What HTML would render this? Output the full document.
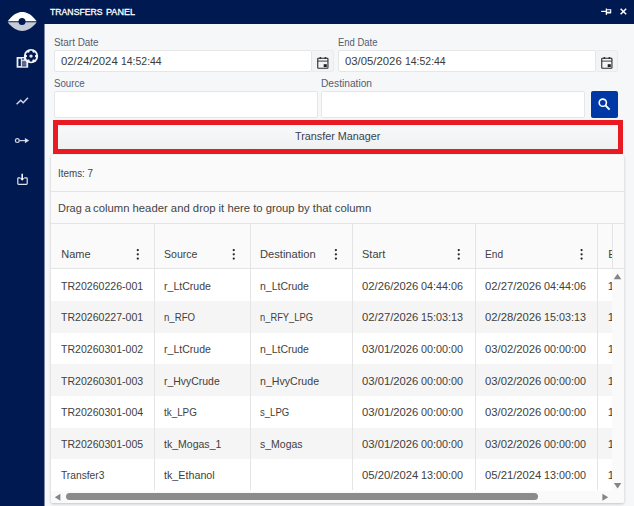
<!DOCTYPE html>
<html><head><meta charset="utf-8">
<style>
*{box-sizing:border-box;margin:0;padding:0}
html,body{width:634px;height:506px;overflow:hidden;background:#f6f7f9;font-family:"Liberation Sans",sans-serif;color:#333}
.abs{position:absolute}
#side{left:0;top:0;width:44px;height:506px;background:#001950}
#title{left:44px;top:0;width:590px;height:24px;background:#001950}
#title .t{position:absolute;top:6.2px;font-size:9.9px;font-weight:normal;-webkit-text-stroke:.32px #fff;color:#fff;line-height:12px;transform-origin:0 50%;white-space:nowrap}
.lbl span{display:inline-block;transform-origin:0 50%}
.lbl{font-size:10px;color:#525d73;line-height:12px;white-space:nowrap}
.inp{position:absolute;background:#fff;border:1px solid #e6e6e6;border-radius:2px;font-size:11px;line-height:20.4px;color:#3a3a3a;padding-left:5.5px;white-space:nowrap}
.di{font-size:11px;line-height:21px;padding-left:6.2px}
.di span{display:inline-block;transform-origin:0 50%}
.d1{transform:translateY(.2px) scaleX(1.03)}
.d2{position:absolute;left:66.1px;top:0;transform:translateY(.2px) scaleX(.95)}
.calbtn{background:#f3f4f6;border:1px solid #eaebed;border-left:none;border-radius:0 3px 3px 0}
#card{left:51.3px;top:154.5px;width:572.6px;height:348.4px;background:#fafafa;box-shadow:0 1px 3px rgba(0,0,0,.22);border-radius:2px;overflow:hidden}
.cell{position:absolute;font-size:11px;line-height:14px;white-space:nowrap;color:#414141}
.row{position:absolute;left:0;width:560.3px;height:31.65px}
.keb{position:absolute;width:2.2px;height:2.2px;background:#222;box-shadow:0 4.1px 0 #222,0 8.2px 0 #222}
.hd{color:#414141}
.rc{font-size:11.4px}
.cell span{display:inline-block;transform-origin:0 50%}
.vl{position:absolute;width:1px;background:#e4e4e4}
.hl{position:absolute;height:1px;background:#e4e4e4;left:0}
</style></head><body>
<div id="side" class="abs">
<svg class="abs" style="left:0;top:0" width="44" height="200" viewBox="0 0 44 200">
 <path d="M7.7 21.3 C12.7 14.5 17.7 12 22.2 12 C26.7 12 31.7 14.5 36.7 21.3 Z" fill="#fff"/>
 <path d="M7.7 22.3 C12.7 28.5 17.7 31 22.2 31 C26.7 31 31.7 28.5 36.7 22.3 Z" fill="#c6cbd9"/>
 <circle cx="22" cy="21.6" r="3.5" fill="#001950"/>
 <!-- icon 2: doc + gear -->
 <rect x="16.6" y="57" width="11.6" height="10.7" fill="#eef0f5"/>
 <rect x="18.4" y="58.7" width="2.4" height="7.4" fill="#001950"/>
 <rect x="21.9" y="60.6" width="4.4" height="5.8" fill="#8f98b3"/>
 <rect x="21.9" y="58.4" width="2" height="1.2" fill="#001950"/>
 <path d="M21.9 62.1h4.4M21.9 64h4.4M21.9 65.8h4.4" stroke="#001950" stroke-width=".7"/>
 <circle cx="31" cy="56.1" r="7.2" fill="#f3f4f8"/>
 <g fill="#001950">
  <circle cx="31" cy="56.1" r="4"/>
  <g id="teeth"><rect x="29.6" y="50.8" width="2.8" height="10.6" rx=".6"/></g>
  <use href="#teeth" transform="rotate(60 31 56.1)"/>
  <use href="#teeth" transform="rotate(120 31 56.1)"/>
 </g>
 <circle cx="31" cy="56.1" r="1.7" fill="#dfe3ee"/>
 <!-- trend -->
 <path d="M16.6 104.2 L20.7 100.3 L23.2 102.7 L28 97.8" fill="none" stroke="#d3d8e6" stroke-width="1.5"/>
 <!-- key arrow -->
 <g fill="none" stroke="#ccd2e1" stroke-width="1.2">
  <circle cx="17.3" cy="140.6" r="1.9"/>
  <path d="M19.3 140.6H25.5"/>
 </g>
 <path d="M24.9 138 L29.2 140.6 L24.9 143.2Z" fill="#d6dbe7"/>
 <!-- download -->
 <g fill="none" stroke="#dfe3ee" stroke-width="1.2">
  <path d="M20.3 177.8H18.6Q17.8 177.8 17.8 178.6V183.5Q17.8 184.3 18.6 184.3H26.4Q27.2 184.3 27.2 183.5V178.6Q27.2 177.8 26.4 177.8H24.2"/>
  <path d="M22.2 173.8V179" stroke="#fff" stroke-width="1.5"/>
 </g>
 <path d="M20 178.2H24.4L22.2 180.7Z" fill="#fff"/>
</svg>
</div>
<div class="abs" style="left:44px;top:24px;width:1px;height:482px;background:#7b88a4"></div>
<div id="title" class="abs"><div class="t" style="left:6.3px;transform:scaleX(.879)">TRANSFERS</div><div class="t" style="left:62.1px;transform:scaleX(.917)">PANEL</div>
<svg class="abs" style="left:552px;top:4px" width="36" height="16" viewBox="0 0 36 16">
 <g fill="none" stroke="#fff" stroke-width="1.4">
  <path d="M5.2 7.4H10.2" stroke-width="1.2"/><path d="M10.4 4.5V10.9" stroke-width="1.3"/><path d="M10.4 5.7H14.7V8.6H10.4" stroke-width="1.1"/><path d="M10.4 8.5H14.9" stroke-width="1.6"/>
  <path d="M24.6 4.7L30.2 10.3M30.2 4.7L24.6 10.3" stroke-width="1.5"/>
 </g>
</svg>
</div>

<div class="abs lbl" style="left:53.7px;top:37.2px"><span style="transform:scaleX(.99)">Start Date</span></div>
<div class="abs inp di" style="left:54px;top:50px;width:258px;height:22px"><span class="d1">02/24/2024</span> <span class="d2">14:52:44</span></div>
<div class="abs calbtn" style="left:312px;top:50px;width:22.3px;height:22px"></div>
<div class="abs lbl" style="left:338px;top:37.2px"><span style="transform:scaleX(.945)">End Date</span></div>
<div class="abs inp di" style="left:338px;top:50px;width:258px;height:22px"><span class="d1">03/05/2026</span> <span class="d2">14:52:44</span></div>
<div class="abs calbtn" style="left:596px;top:50px;width:22px;height:22px"></div>
<svg class="abs" style="left:315.1px;top:54.5px" width="16" height="16" viewBox="0 0 16 16"><g id="cal" fill="none" stroke="#2b2b2b" stroke-width="1.1"><rect x="2.75" y="3.3" width="10.2" height="9.9" rx=".5"/><path d="M2.75 6.1H12.95" stroke-width=".9"/><circle cx="5.35" cy="3.1" r="1" fill="#2b2b2b" stroke="none"/><circle cx="10.45" cy="3.1" r="1" fill="#2b2b2b" stroke="none"/><rect x="8.7" y="9.2" width="3.1" height="2.9" fill="#222" stroke="none"/></g></svg>
<svg class="abs" style="left:598.9px;top:54.5px" width="16" height="16" viewBox="0 0 16 16"><use href="#cal"/></svg>

<div class="abs lbl" style="left:53.7px;top:78.3px"><span style="transform:scaleX(.97)">Source</span></div>
<div class="abs inp" style="left:54px;top:91px;width:264px;height:27px"></div>
<div class="abs lbl" style="left:321px;top:78.3px"><span style="transform:scaleX(1.02)">Destination</span></div>
<div class="abs inp" style="left:321px;top:91px;width:264px;height:27px"></div>
<div class="abs" style="left:591px;top:91px;width:27px;height:27px;background:#0039a6;border-radius:2px"></div>
<svg class="abs" style="left:591px;top:91px" width="27" height="27" viewBox="0 0 27 27"><g fill="none" stroke="#fff" stroke-width="1.6"><circle cx="11.8" cy="11.7" r="3.6"/><path d="M14.4 14.4L18.6 18.6" stroke-width="2"/></g></svg>

<div class="abs" style="left:53.1px;top:119.9px;width:569.5px;height:33.8px;background:#ea1a23"><div class="abs" style="left:4.8px;top:5.1px;width:559.9px;height:23.8px;background:linear-gradient(#f8f9fb,#eff0f2);font-size:11.8px;line-height:23.4px;text-align:center;color:#3a3f4b"><span id="tm" style="display:inline-block;transform:scaleX(.915);position:relative;left:-0.4px">Transfer Manager</span></div></div>

<div id="card" class="abs">
 <div class="cell" style="left:7px;top:11.4px;font-size:10px;color:#444"><span style="transform:translateY(.7px) scaleX(.985)">Items: 7</span></div>
 <div class="hl" style="top:36.4px;width:573px"></div>
 <div class="cell" style="left:7px;top:46.6px;font-size:11px;color:#444"><span style="transform:scaleX(.995)">Drag a</span> <span style="position:absolute;left:34.9px;top:0;transform:scaleX(1.027)">column header and drop it here to group by that column</span></div>
 <div class="hl" style="top:68.5px;width:573px"></div>
<!--GRID-->
<div class="abs" style="left:0;top:70px;width:572px;height:44px;background:#fafafa"></div>
<div class="cell hd" style="left:9.9px;top:92.9px"><span style="transform:scaleX(1.000)">Name</span></div>
<div class="cell hd" style="left:112.7px;top:92.9px"><span style="transform:scaleX(0.960)">Source</span></div>
<div class="cell hd" style="left:208.7px;top:92.9px"><span style="transform:scaleX(1.012)">Destination</span></div>
<div class="cell hd" style="left:310.7px;top:92.9px"><span style="transform:scaleX(1.000)">Start</span></div>
<div class="cell hd" style="left:433.7px;top:92.9px"><span style="transform:scaleX(0.925)">End</span></div>
<div class="cell hd" style="left:557.0px;top:92.9px;width:3.4px;overflow:hidden"><span>E</span></div>
<div class="row" style="top:114.8px;background:#fff">
<div class="cell rc" style="left:9.9px;top:9.3px"><span style="transform:scaleX(0.927)">TR20260226-001</span></div>
<div class="cell rc" style="left:112.7px;top:9.3px"><span style="transform:scaleX(0.926)">r_LtCrude</span></div>
<div class="cell rc" style="left:208.7px;top:9.3px"><span style="transform:scaleX(0.920)">n_LtCrude</span></div>
<div class="cell rc" style="left:310.7px;top:9.3px"><span style="transform:scaleX(0.989)">02/26/2026</span> <span style="position:absolute;left:59.4px;top:0;transform:scaleX(0.946)">04:44:06</span></div>
<div class="cell rc" style="left:433.7px;top:9.3px"><span style="transform:scaleX(0.989)">02/27/2026</span> <span style="position:absolute;left:59.4px;top:0;transform:scaleX(0.946)">04:44:06</span></div>
<div class="cell rc" style="left:556.5px;top:9.3px;width:4.4px;overflow:hidden"><span>1</span></div>
</div>
<div class="row" style="top:146.45px;background:#f5f5f5">
<div class="cell rc" style="left:9.9px;top:9.3px"><span style="transform:scaleX(0.927)">TR20260227-001</span></div>
<div class="cell rc" style="left:112.7px;top:9.3px"><span style="transform:scaleX(0.844)">n_RFO</span></div>
<div class="cell rc" style="left:208.7px;top:9.3px"><span style="transform:scaleX(0.820)">n_RFY_LPG</span></div>
<div class="cell rc" style="left:310.7px;top:9.3px"><span style="transform:scaleX(0.989)">02/27/2026</span> <span style="position:absolute;left:59.4px;top:0;transform:scaleX(0.946)">15:03:13</span></div>
<div class="cell rc" style="left:433.7px;top:9.3px"><span style="transform:scaleX(0.989)">02/28/2026</span> <span style="position:absolute;left:59.4px;top:0;transform:scaleX(0.946)">15:03:13</span></div>
<div class="cell rc" style="left:556.5px;top:9.3px;width:4.4px;overflow:hidden"><span>1</span></div>
</div>
<div class="row" style="top:178.1px;background:#fff">
<div class="cell rc" style="left:9.9px;top:9.3px"><span style="transform:scaleX(0.927)">TR20260301-002</span></div>
<div class="cell rc" style="left:112.7px;top:9.3px"><span style="transform:scaleX(0.926)">r_LtCrude</span></div>
<div class="cell rc" style="left:208.7px;top:9.3px"><span style="transform:scaleX(0.920)">n_LtCrude</span></div>
<div class="cell rc" style="left:310.7px;top:9.3px"><span style="transform:scaleX(0.989)">03/01/2026</span> <span style="position:absolute;left:59.4px;top:0;transform:scaleX(0.946)">00:00:00</span></div>
<div class="cell rc" style="left:433.7px;top:9.3px"><span style="transform:scaleX(0.989)">03/02/2026</span> <span style="position:absolute;left:59.4px;top:0;transform:scaleX(0.946)">00:00:00</span></div>
<div class="cell rc" style="left:556.5px;top:9.3px;width:4.4px;overflow:hidden"><span>1</span></div>
</div>
<div class="row" style="top:209.75px;background:#f5f5f5">
<div class="cell rc" style="left:9.9px;top:9.3px"><span style="transform:scaleX(0.927)">TR20260301-003</span></div>
<div class="cell rc" style="left:112.7px;top:9.3px"><span style="transform:scaleX(0.917)">r_HvyCrude</span></div>
<div class="cell rc" style="left:208.7px;top:9.3px"><span style="transform:scaleX(0.933)">n_HvyCrude</span></div>
<div class="cell rc" style="left:310.7px;top:9.3px"><span style="transform:scaleX(0.989)">03/01/2026</span> <span style="position:absolute;left:59.4px;top:0;transform:scaleX(0.946)">00:00:00</span></div>
<div class="cell rc" style="left:433.7px;top:9.3px"><span style="transform:scaleX(0.989)">03/02/2026</span> <span style="position:absolute;left:59.4px;top:0;transform:scaleX(0.946)">00:00:00</span></div>
<div class="cell rc" style="left:556.5px;top:9.3px;width:4.4px;overflow:hidden"><span>1</span></div>
</div>
<div class="row" style="top:241.39999999999998px;background:#fff">
<div class="cell rc" style="left:9.9px;top:9.3px"><span style="transform:scaleX(0.927)">TR20260301-004</span></div>
<div class="cell rc" style="left:112.7px;top:9.3px"><span style="transform:scaleX(0.864)">tk_LPG</span></div>
<div class="cell rc" style="left:208.7px;top:9.3px"><span style="transform:scaleX(0.839)">s_LPG</span></div>
<div class="cell rc" style="left:310.7px;top:9.3px"><span style="transform:scaleX(0.989)">03/01/2026</span> <span style="position:absolute;left:59.4px;top:0;transform:scaleX(0.946)">00:00:00</span></div>
<div class="cell rc" style="left:433.7px;top:9.3px"><span style="transform:scaleX(0.989)">03/02/2026</span> <span style="position:absolute;left:59.4px;top:0;transform:scaleX(0.946)">00:00:00</span></div>
<div class="cell rc" style="left:556.5px;top:9.3px;width:4.4px;overflow:hidden"><span>1</span></div>
</div>
<div class="row" style="top:273.05px;background:#f5f5f5">
<div class="cell rc" style="left:9.9px;top:9.3px"><span style="transform:scaleX(0.927)">TR20260301-005</span></div>
<div class="cell rc" style="left:112.7px;top:9.3px"><span style="transform:scaleX(0.924)">tk_Mogas_1</span></div>
<div class="cell rc" style="left:208.7px;top:9.3px"><span style="transform:scaleX(0.920)">s_Mogas</span></div>
<div class="cell rc" style="left:310.7px;top:9.3px"><span style="transform:scaleX(0.989)">03/01/2026</span> <span style="position:absolute;left:59.4px;top:0;transform:scaleX(0.946)">00:00:00</span></div>
<div class="cell rc" style="left:433.7px;top:9.3px"><span style="transform:scaleX(0.989)">03/02/2026</span> <span style="position:absolute;left:59.4px;top:0;transform:scaleX(0.946)">00:00:00</span></div>
<div class="cell rc" style="left:556.5px;top:9.3px;width:4.4px;overflow:hidden"><span>1</span></div>
</div>
<div class="row" style="top:304.7px;background:#fff">
<div class="cell rc" style="left:9.9px;top:9.3px"><span style="transform:scaleX(0.897)">Transfer3</span></div>
<div class="cell rc" style="left:112.7px;top:9.3px"><span style="transform:scaleX(0.942)">tk_Ethanol</span></div>
<div class="cell rc" style="left:310.7px;top:9.3px"><span style="transform:scaleX(0.989)">05/20/2024</span> <span style="position:absolute;left:59.4px;top:0;transform:scaleX(0.946)">13:00:00</span></div>
<div class="cell rc" style="left:433.7px;top:9.3px"><span style="transform:scaleX(0.989)">05/21/2024</span> <span style="position:absolute;left:59.4px;top:0;transform:scaleX(0.946)">13:00:00</span></div>
<div class="cell rc" style="left:556.5px;top:9.3px;width:4.4px;overflow:hidden"><span>1</span></div>
</div>
<div class="vl" style="left:102.3px;top:69.5px;height:266px"></div>
<div class="vl" style="left:198.25px;top:69.5px;height:266px"></div>
<div class="vl" style="left:300.4px;top:69.5px;height:266px"></div>
<div class="vl" style="left:423.25px;top:69.5px;height:266px"></div>
<div class="vl" style="left:546.1px;top:69.5px;height:266px"></div>
<div class="vl" style="left:560.3px;top:69.5px;height:45px"></div>
<div class="abs" style="left:560.3px;top:114.75px;width:12.4px;height:221.5px;background:#fafafa"></div>
<div class="abs" style="left:0;top:336px;width:573px;height:13px;background:#fafafa"></div>
<div class="abs" style="left:14.4px;top:338.7px;width:472.2px;height:7px;border-radius:3.5px;background:#8b8b8b"></div>
<svg class="abs" style="left:0;top:0" width="573" height="349" viewBox="0 0 573 349"><g fill="#262626"><circle cx="86.80" cy="95.1" r="1.15"/><circle cx="86.80" cy="99.35" r="1.15"/><circle cx="86.80" cy="103.6" r="1.15"/><circle cx="182.75" cy="95.1" r="1.15"/><circle cx="182.75" cy="99.35" r="1.15"/><circle cx="182.75" cy="103.6" r="1.15"/><circle cx="284.90" cy="95.1" r="1.15"/><circle cx="284.90" cy="99.35" r="1.15"/><circle cx="284.90" cy="103.6" r="1.15"/><circle cx="407.75" cy="95.1" r="1.15"/><circle cx="407.75" cy="99.35" r="1.15"/><circle cx="407.75" cy="103.6" r="1.15"/><circle cx="530.60" cy="95.1" r="1.15"/><circle cx="530.60" cy="99.35" r="1.15"/><circle cx="530.60" cy="103.6" r="1.15"/></g><g fill="#858585"><path d="M562.7 124.3H570.3L566.5 118.7Z"/><path d="M562.9 328H570.3L566.6 333.5Z"/><path d="M9.4 338.8V345.8L3.8 342.3Z"/><path d="M551.4 338.8V345.8L557.2 342.3Z"/></g></svg>
<!--/GRID-->
 <div class="hl" style="top:113.8px;width:573px"></div>
</div>
</body></html>
